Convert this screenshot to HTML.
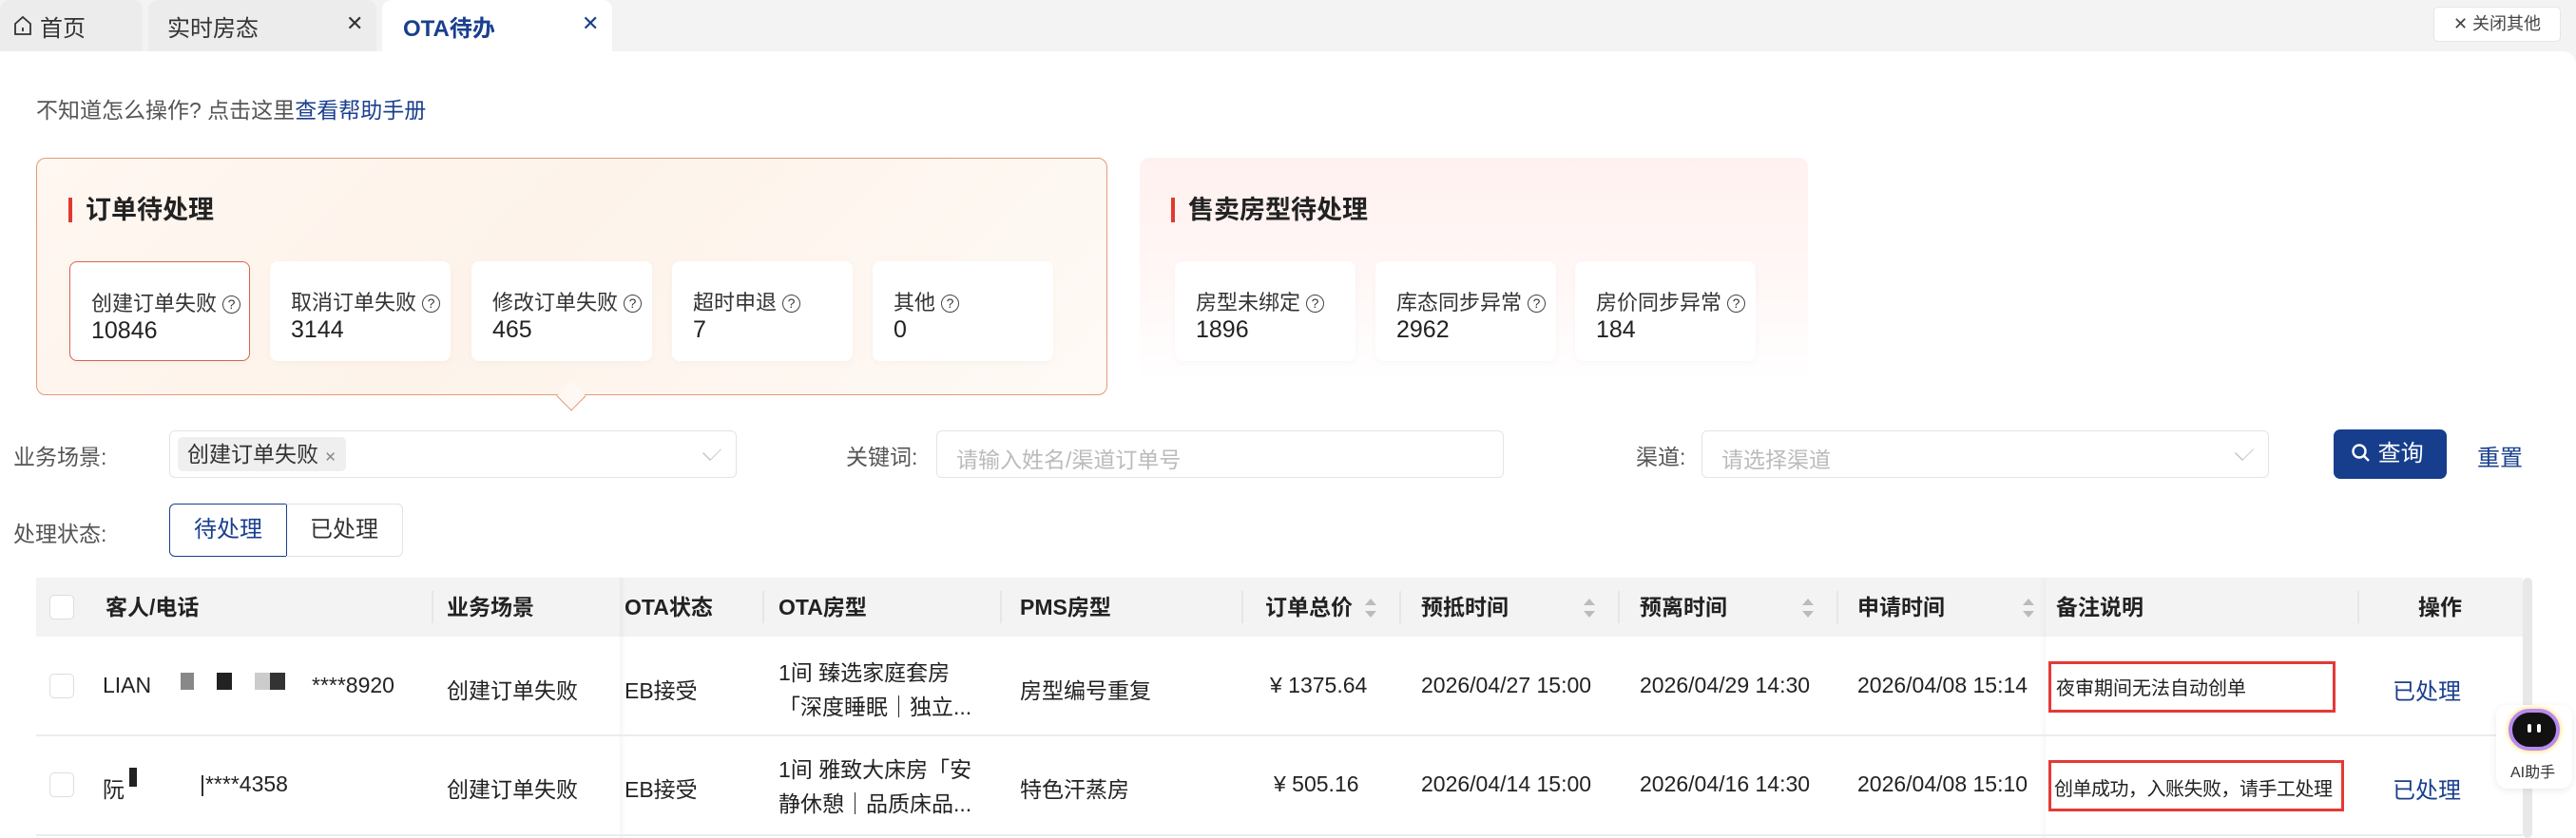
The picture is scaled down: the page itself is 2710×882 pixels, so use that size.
<!DOCTYPE html>
<html><head><meta charset="utf-8"><style>
*{box-sizing:border-box;margin:0;padding:0}
body{width:2710px;height:882px;overflow:hidden;background:#f3f3f3;font-family:"Liberation Sans","Noto Sans CJK SC",sans-serif;color:#222;position:relative;font-size:24px}
.abs{position:absolute}
.tab{position:absolute;top:0;height:54px;background:#ececec;border-radius:10px 10px 0 0;display:flex;align-items:center;font-size:24px;color:#333}
.main{position:absolute;left:0;top:54px;width:2710px;height:828px;background:#fff;border-radius:0 14px 0 0}
.card{position:absolute;top:275px;height:105px;width:190px;background:#fff;border-radius:8px;box-shadow:0 2px 8px rgba(0,0,0,0.03)}
.card .l{position:absolute;left:22px;top:26px;font-size:22px;color:#333;white-space:nowrap}
.card .n{position:absolute;left:22px;top:58px;font-size:25px;color:#222}
.q{display:inline-block;width:19px;height:19px;border:1.6px solid #444;border-radius:50%;font-size:14px;line-height:16px;text-align:center;margin-left:6px;vertical-align:2px}
.ttl{position:absolute;font-size:27px;font-weight:bold;color:#222;padding-left:14px;border-left:4px solid #e03a2f;line-height:26px}
.inp{position:absolute;height:50px;border:1.5px solid #e4e4e4;border-radius:6px;background:#fff}
.lab{position:absolute;font-size:23px;color:#555}
.ph{position:absolute;left:20px;top:11px;font-size:23px;color:#bbb}
.chev{position:absolute;right:18px;top:14px;width:14px;height:14px;border-right:1.6px solid #bbb;border-bottom:1.6px solid #bbb;transform:rotate(45deg) scale(0.8,1.2)}
.th{position:absolute;top:608px;height:62px;font-size:23px;font-weight:bold;color:#222;line-height:62px}
.sep{position:absolute;top:622px;height:34px;width:1.5px;background:#e6e6e6}
.td{position:absolute;font-size:23px;color:#222;white-space:nowrap}
.cb{position:absolute;left:52px;width:26px;height:26px;border:1.5px solid #ddd;border-radius:5px;background:#fff}
.sort{position:absolute;top:630px;width:12px;height:20px}
.sort:before{content:"";position:absolute;left:0;top:0;border:6px solid transparent;border-bottom:7px solid #bbb;border-top:0}
.sort:after{content:"";position:absolute;left:0;bottom:0;border:6px solid transparent;border-top:7px solid #bbb;border-bottom:0}
.red{position:absolute;border:3px solid #e53935}
</style></head><body>
<div class="tab" style="left:0;width:150px;padding-left:14px"><svg width="20" height="22" viewBox="0 0 20 22"><path d="M2 9 L10 2 L18 9 V20 H2 Z" fill="none" stroke="#333" stroke-width="1.8"/><path d="M10 13 V17" stroke="#333" stroke-width="1.8"/></svg><span style="margin-left:8px">首页</span></div>
<div class="tab" style="left:156px;width:240px;padding-left:20px">实时房态<span class="abs" style="left:208px;top:12px;font-size:22px;color:#333">✕</span></div>
<div class="tab" style="left:402px;width:242px;padding-left:22px;background:#fff;color:#1a3f8f;font-weight:bold">OTA待办<span class="abs" style="left:210px;top:12px;font-size:22px;color:#1a3f8f;font-weight:normal">✕</span></div>
<div class="abs" style="left:2560px;top:7px;width:134px;height:37px;background:#fff;border:1px solid #e6e6e6;border-radius:5px;font-size:18px;color:#444;line-height:35px;text-align:center">✕ 关闭其他</div>
<div class="main"></div>
<div class="abs" style="left:38px;top:97px;font-size:23px;color:#555">不知道怎么操作? 点击这里<span style="color:#1a3f8f">查看帮助手册</span></div>

<div class="abs" style="left:38px;top:166px;width:1127px;height:250px;border:1.5px solid #e39a75;border-radius:10px;background:linear-gradient(135deg,#fff7f1 0%,#fdf3ea 45%,#fffaf6 100%)"></div>
<div class="abs" style="left:590px;top:406px;width:22px;height:22px;background:#fdf8f3;border-right:1.5px solid #e39a75;border-bottom:1.5px solid #e39a75;transform:rotate(45deg)"></div>
<div class="ttl" style="left:72px;top:208px">订单待处理</div>
<div class="card" style="left:73px;border:1.5px solid #d9644f"><div class="l">创建订单失败<span class="q">?</span></div><div class="n">10846</div></div>
<div class="card" style="left:284px"><div class="l">取消订单失败<span class="q">?</span></div><div class="n">3144</div></div>
<div class="card" style="left:496px"><div class="l">修改订单失败<span class="q">?</span></div><div class="n">465</div></div>
<div class="card" style="left:707px"><div class="l">超时申退<span class="q">?</span></div><div class="n">7</div></div>
<div class="card" style="left:918px"><div class="l">其他<span class="q">?</span></div><div class="n">0</div></div>

<div class="abs" style="left:1199px;top:166px;width:703px;height:236px;border-radius:10px;background:linear-gradient(180deg,#fff1ef 0%,#fff8f7 60%,#fff 100%)"></div>
<div class="ttl" style="left:1232px;top:208px">售卖房型待处理</div>
<div class="card" style="left:1236px"><div class="l">房型未绑定<span class="q">?</span></div><div class="n">1896</div></div>
<div class="card" style="left:1447px"><div class="l">库态同步异常<span class="q">?</span></div><div class="n">2962</div></div>
<div class="card" style="left:1657px"><div class="l">房价同步异常<span class="q">?</span></div><div class="n">184</div></div>

<div class="lab" style="left:14px;top:462px">业务场景:</div>
<div class="inp" style="left:178px;top:453px;width:597px"><div class="abs" style="left:8px;top:6px;height:36px;padding:0 10px;background:#efefef;border-radius:5px;font-size:23px;line-height:36px;color:#333">创建订单失败 <span style="font-size:15px;color:#888">✕</span></div><div class="chev"></div></div>
<div class="lab" style="left:890px;top:462px">关键词:</div>
<div class="inp" style="left:985px;top:453px;width:597px"><div class="ph">请输入姓名/渠道订单号</div></div>
<div class="lab" style="left:1721px;top:462px">渠道:</div>
<div class="inp" style="left:1790px;top:453px;width:597px"><div class="ph">请选择渠道</div><div class="chev"></div></div>
<div class="abs" style="left:2455px;top:452px;width:119px;height:52px;background:#163e8c;border-radius:7px;color:#fff;font-size:24px;line-height:52px;padding-left:18px"><svg width="22" height="22" viewBox="0 0 22 22" style="vertical-align:-3px"><circle cx="9" cy="9" r="6.5" fill="none" stroke="#fff" stroke-width="2.4"/><path d="M14 14 L19 19" stroke="#fff" stroke-width="2.4"/></svg> 查询</div>
<div class="abs" style="left:2606px;top:462px;font-size:24px;color:#1a3f8f">重置</div>

<div class="lab" style="left:14px;top:543px">处理状态:</div>
<div class="abs" style="left:178px;top:530px;width:124px;height:56px;border:1.5px solid #1a3f8f;border-radius:6px 0 0 6px;color:#1a3f8f;font-size:24px;line-height:53px;text-align:center">待处理</div>
<div class="abs" style="left:301px;top:530px;width:123px;height:56px;border:1.5px solid #e2e2e2;border-left:none;border-radius:0 6px 6px 0;color:#333;font-size:24px;line-height:53px;text-align:center">已处理</div>

<div class="abs" style="left:38px;top:608px;width:2616px;height:62px;background:#f3f3f3"></div>
<div class="abs" style="left:652px;top:608px;width:6px;height:274px;background:linear-gradient(90deg,rgba(0,0,0,0.04),transparent)"></div>
<div class="abs" style="left:2146px;top:608px;width:6px;height:274px;background:linear-gradient(270deg,rgba(0,0,0,0.03),transparent)"></div>
<div class="abs" style="left:2654px;top:608px;width:10px;height:274px;background:#e8e8e8;border-radius:5px"></div>
<div class="cb" style="top:626px"></div>
<div class="th" style="left:111px">客人/电话</div><div class="sep" style="left:454px"></div>
<div class="th" style="left:470px">业务场景</div>
<div class="th" style="left:657px">OTA状态</div><div class="sep" style="left:802px"></div>
<div class="th" style="left:819px">OTA房型</div><div class="sep" style="left:1052px"></div>
<div class="th" style="left:1073px">PMS房型</div><div class="sep" style="left:1306px"></div>
<div class="th" style="left:1331px">订单总价</div><div class="sort" style="left:1436px"></div><div class="sep" style="left:1472px"></div>
<div class="th" style="left:1495px">预抵时间</div><div class="sort" style="left:1666px"></div><div class="sep" style="left:1702px"></div>
<div class="th" style="left:1725px">预离时间</div><div class="sort" style="left:1896px"></div><div class="sep" style="left:1932px"></div>
<div class="th" style="left:1954px">申请时间</div><div class="sort" style="left:2128px"></div>
<div class="th" style="left:2163px">备注说明</div><div class="sep" style="left:2480px"></div>
<div class="th" style="left:2544px">操作</div>

<div class="abs" style="left:38px;top:773px;width:2616px;height:1.5px;background:#ececec"></div>
<div class="abs" style="left:38px;top:878px;width:2616px;height:1.5px;background:#ececec"></div>

<div class="cb" style="top:709px"></div>
<div class="td" style="left:108px;top:708px">LIAN</div>
<div class="abs" style="left:190px;top:708px;width:14px;height:18px;background:#888"></div>
<div class="abs" style="left:228px;top:708px;width:16px;height:18px;background:#222"></div>
<div class="abs" style="left:268px;top:708px;width:16px;height:18px;background:#ccc"></div><div class="abs" style="left:284px;top:708px;width:16px;height:18px;background:#333"></div>
<div class="td" style="left:328px;top:708px">****8920</div>
<div class="td" style="left:470px;top:708px">创建订单失败</div>
<div class="td" style="left:657px;top:708px">EB接受</div>
<div class="td" style="left:819px;top:690px;line-height:36px">1间 臻选家庭套房<br>「深度睡眠｜独立...</div>
<div class="td" style="left:1073px;top:708px">房型编号重复</div>
<div class="td" style="left:1336px;top:708px">¥ 1375.64</div>
<div class="td" style="left:1495px;top:708px">2026/04/27 15:00</div>
<div class="td" style="left:1725px;top:708px">2026/04/29 14:30</div>
<div class="td" style="left:1954px;top:708px">2026/04/08 15:14</div>
<div class="red" style="left:2155px;top:696px;width:302px;height:54px"></div>
<div class="td" style="left:2163px;top:708px;font-size:20px">夜审期间无法自动创单</div>
<div class="td" style="left:2517px;top:708px;color:#1a3f8f;font-size:24px">已处理</div>

<div class="cb" style="top:813px"></div>
<div class="td" style="left:108px;top:812px">阮</div>
<div class="abs" style="left:136px;top:808px;width:8px;height:20px;background:#222"></div>
<div class="td" style="left:210px;top:812px">|****4358</div>
<div class="td" style="left:470px;top:812px">创建订单失败</div>
<div class="td" style="left:657px;top:812px">EB接受</div>
<div class="td" style="left:819px;top:792px;line-height:36px">1间 雅致大床房「安<br>静休憩｜品质床品...</div>
<div class="td" style="left:1073px;top:812px">特色汗蒸房</div>
<div class="td" style="left:1340px;top:812px">¥ 505.16</div>
<div class="td" style="left:1495px;top:812px">2026/04/14 15:00</div>
<div class="td" style="left:1725px;top:812px">2026/04/16 14:30</div>
<div class="td" style="left:1954px;top:812px">2026/04/08 15:10</div>
<div class="red" style="left:2155px;top:800px;width:311px;height:54px"></div>
<div class="td" style="left:2161px;top:814px;font-size:20px;letter-spacing:-0.5px">创单成功，入账失败，请手工处理</div>
<div class="td" style="left:2517px;top:812px;color:#1a3f8f;font-size:24px">已处理</div>

<div class="abs" style="left:2626px;top:742px;width:80px;height:88px;background:#fff;border-radius:12px;box-shadow:0 2px 8px rgba(0,0,0,0.08)"></div>
<div class="abs" style="left:2639px;top:746px;width:54px;height:44px;border-radius:22px;background:#111;border:4px solid #b98af0;box-shadow:0 0 6px #ffd54a"><div class="abs" style="left:16px;top:12px;width:4px;height:9px;background:#fff;border-radius:2px"></div><div class="abs" style="left:26px;top:12px;width:4px;height:9px;background:#fff;border-radius:2px"></div></div>
<div class="abs" style="left:2641px;top:799px;font-size:16px;color:#333">AI助手</div>
</body></html>
